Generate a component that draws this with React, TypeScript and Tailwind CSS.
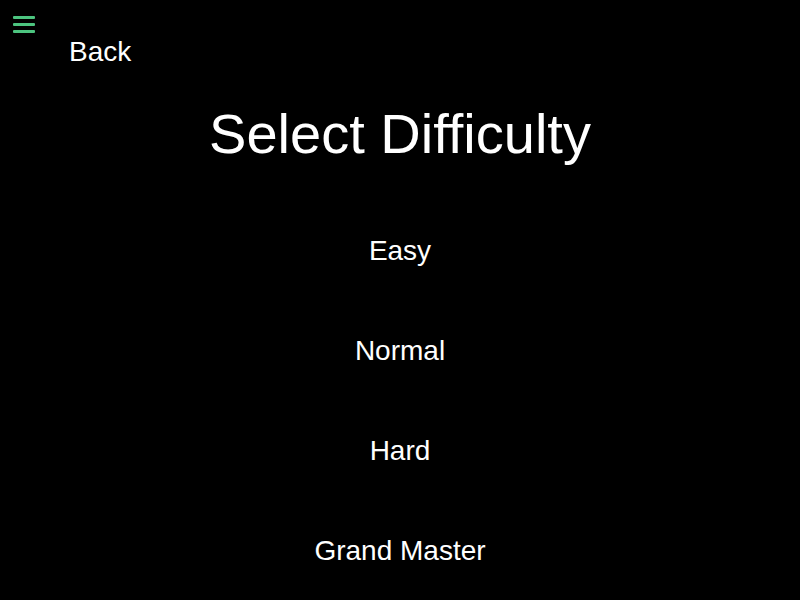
import React from "react";

export default function App() {
  const items = ["Easy", "Normal", "Hard", "Grand Master"];
  return (
    <div
      className="w-full h-[600px] bg-black text-white overflow-hidden flex flex-col"
      style={{ fontFamily: '"Liberation Sans", Arial, sans-serif' }}
    >
      <div className="pt-[16px] pl-[13px] flex flex-col gap-[4px]">
        <div className="h-[3px] w-[22px] bg-[#4cc47f] rounded-[1px]" />
        <div className="h-[3px] w-[22px] bg-[#4cc47f] rounded-[1px]" />
        <div className="h-[3px] w-[22px] bg-[#4cc47f] rounded-[1px]" />
      </div>
      <div className="mt-[5px] ml-[69px] text-[28px] leading-none">Back</div>
      <div className="mt-[40px] text-center text-[56px] leading-none">
        Select Difficulty
      </div>
      <div className="mt-[75px] flex flex-col items-center gap-[72px]">
        {items.map((t) => (
          <div key={t} className="text-[28px] leading-none">
            {t}
          </div>
        ))}
      </div>
    </div>
  );
}
